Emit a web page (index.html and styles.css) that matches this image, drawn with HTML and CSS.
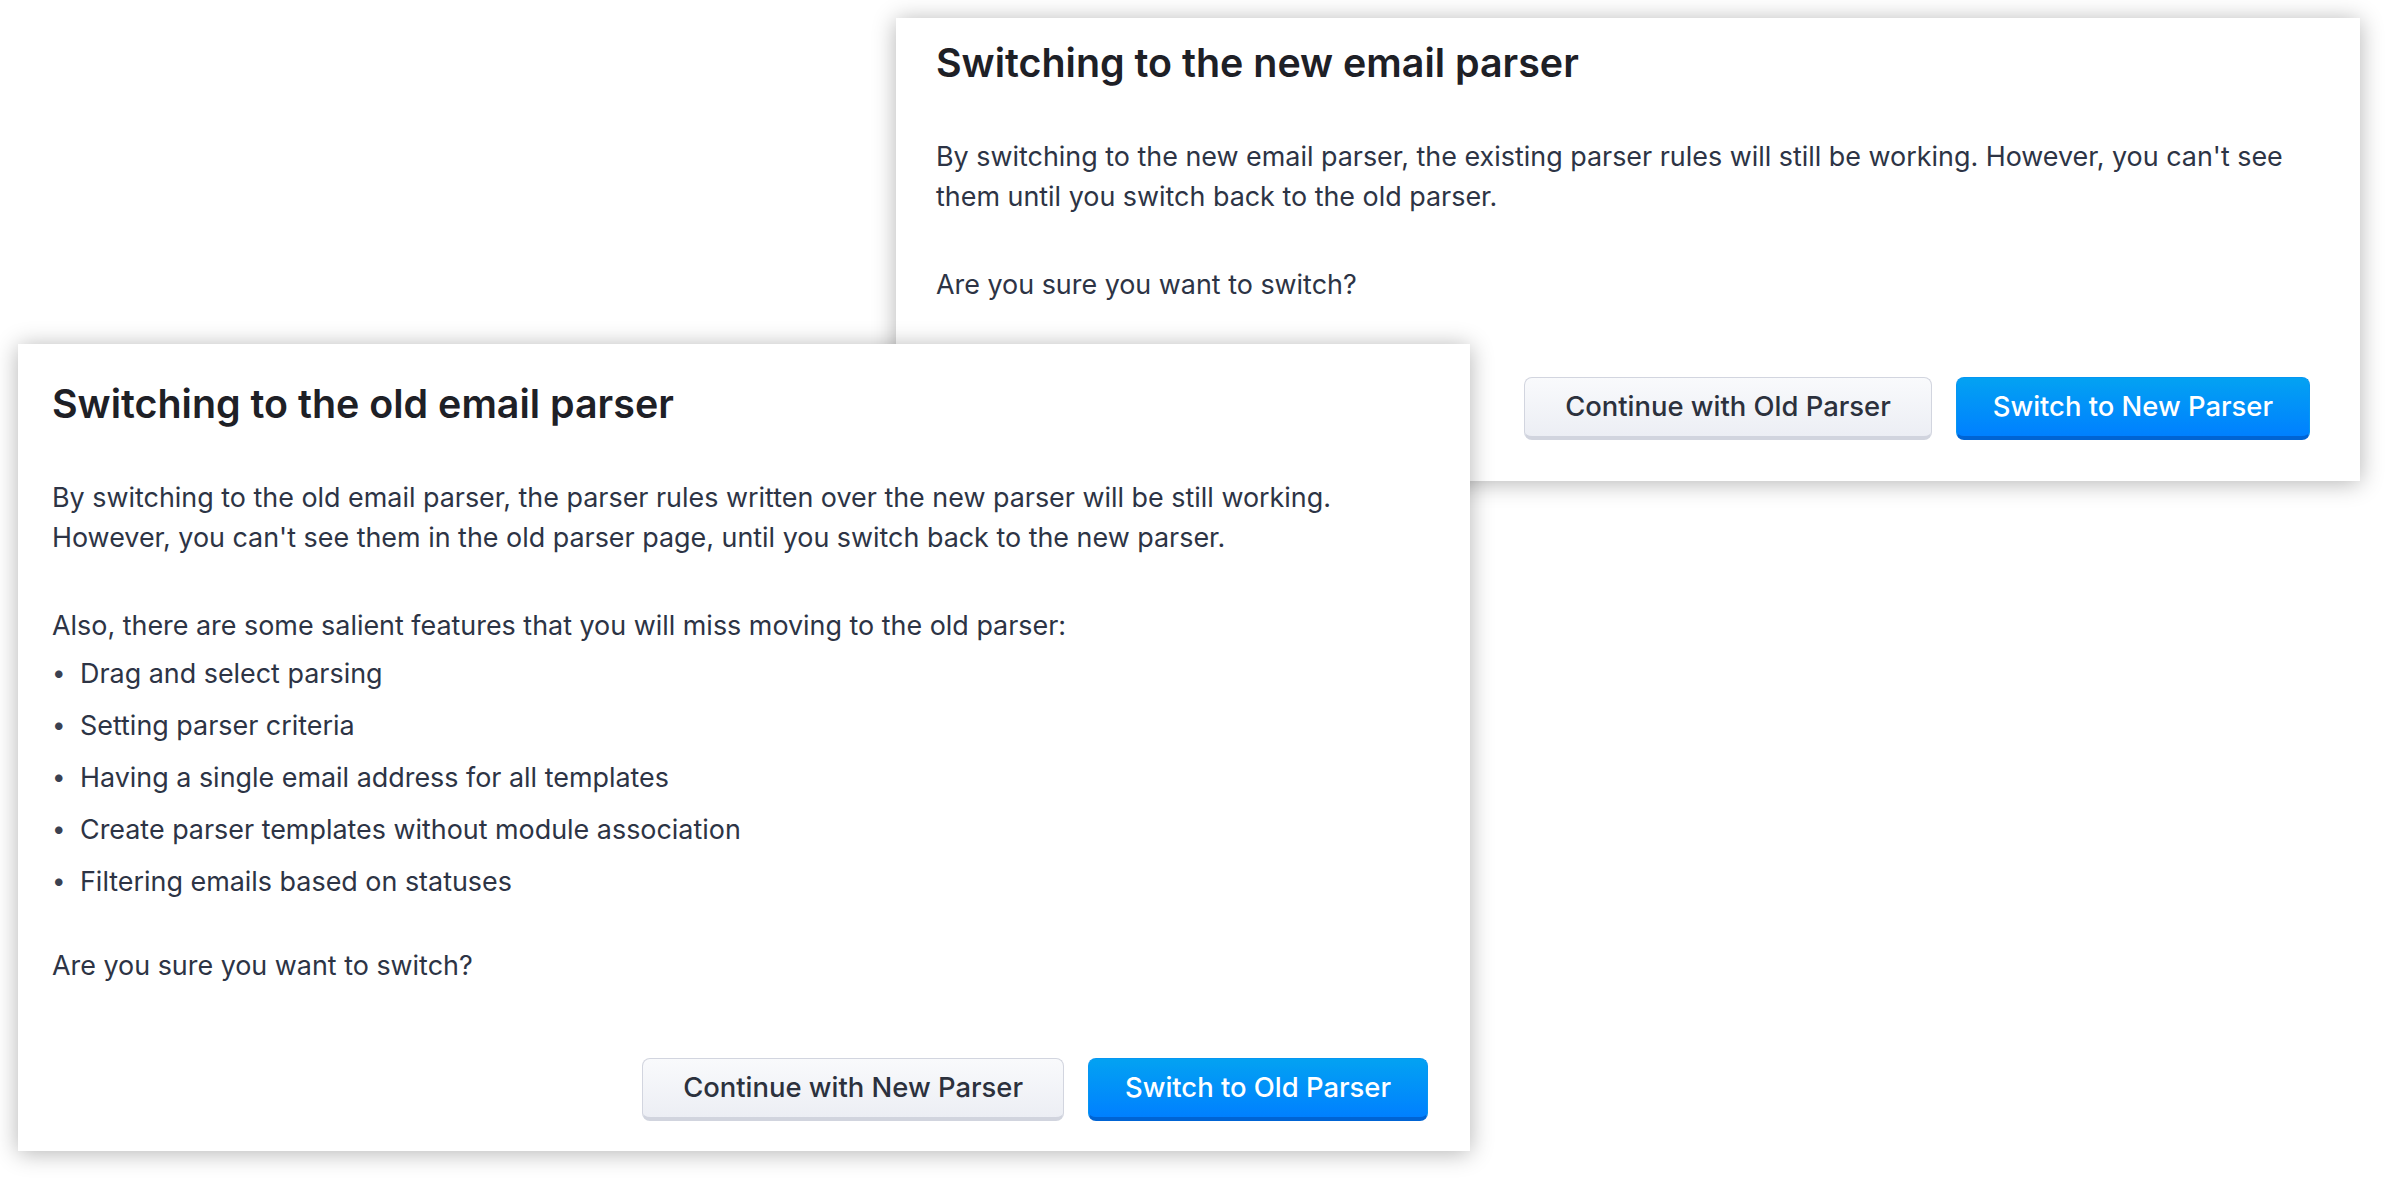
FILE: index.html
```html
<!DOCTYPE html>
<html lang="en">
<head>
<meta charset="utf-8">
<title>Email parser switch dialogs</title>
<link rel="stylesheet" href="styles.css">
</head>
<body>
<div class="canvas">
  <section class="dialog dialog--new">
    <h2 class="dialog__title">Switching to the new email parser</h2>
    <p class="dialog__text">By switching to the new email parser, the existing parser rules will still be working. However, you can't see them until you switch back to the old parser.</p>
    <p class="dialog__text">Are you sure you want to switch?</p>
    <div class="dialog__actions">
      <button class="btn btn--secondary">Continue with Old Parser</button>
      <button class="btn btn--primary">Switch to New Parser</button>
    </div>
  </section>

  <section class="dialog dialog--old">
    <h2 class="dialog__title">Switching to the old email parser</h2>
    <p class="dialog__text">By switching to the old email parser, the parser rules written over the new parser will be still working. However, you can't see them in the old parser page, until you switch back to the new parser.</p>
    <p class="dialog__text dialog__text--lead">Also, there are some salient features that you will miss moving to the old parser:</p>
    <ul class="dialog__list">
      <li>Drag and select parsing</li>
      <li>Setting parser criteria</li>
      <li>Having a single email address for all templates</li>
      <li>Create parser templates without module association</li>
      <li>Filtering emails based on statuses</li>
    </ul>
    <p class="dialog__text">Are you sure you want to switch?</p>
    <div class="dialog__actions">
      <button class="btn btn--secondary">Continue with New Parser</button>
      <button class="btn btn--primary">Switch to Old Parser</button>
    </div>
  </section>
</div>
</body>
</html>
```

FILE: styles.css
```css
* { box-sizing: border-box; }

html, body {
  margin: 0;
  padding: 0;
  background: #ffffff;
}

body {
  font-family: "Inter", "Noto Sans", sans-serif;
  color: #2d3445;
}

.canvas {
  position: relative;
  width: 2390px;
  height: 1184px;
  overflow: hidden;
}

.dialog {
  position: absolute;
  background: #ffffff;
  box-shadow: 0 2px 22px rgba(0, 0, 0, 0.30);
  display: flex;
  flex-direction: column;
}

.dialog--new {
  left: 896px;
  top: 18px;
  width: 1464px;
  padding: 21px 50px 41px 40px;
  z-index: 1;
}

.dialog--old {
  left: 18px;
  top: 344px;
  width: 1452px;
  padding: 36px 42px 30px 34px;
  z-index: 2;
}

.dialog__title {
  margin: 0 0 49px;
  font-size: 39.4px;
  line-height: 48px;
  font-weight: 600;
  color: #1e2026;
  letter-spacing: 0;
}

.dialog__text {
  margin: 0 0 48px;
  font-size: 26.9px;
  line-height: 40px;
  font-weight: 400;
  color: #2d3445;
}

.dialog__text--lead {
  margin-bottom: 0;
}

.dialog__list {
  list-style: none;
  margin: 8px 0 44px;
  padding: 0;
  font-size: 26.9px;
  line-height: 40px;
  color: #2d3445;
}

.dialog__list li {
  display: flex;
}

.dialog__list li + li {
  margin-top: 12px;
}

.dialog__list li::before {
  content: "\2022";
  flex: 0 0 28px;
  font-size: 24px;
  color: #3a4151;
}

.dialog__actions {
  display: flex;
  justify-content: flex-end;
  gap: 24px;
  margin-top: 25px;
}

.btn {
  height: 63px;
  padding: 0 40px;
  border-radius: 8px;
  font-family: "Inter", "Noto Sans", sans-serif;
  font-size: 27.4px;
  font-weight: 500;
  line-height: 1;
  cursor: pointer;
}

.btn--secondary {
  color: #2c313d;
  background: linear-gradient(#f9fafc, #eceef4);
  border: 1px solid #d2d5df;
  border-bottom: 4px solid #d1d4de;
}

.btn--primary {
  padding: 0 36px;
  color: #ffffff;
  background: linear-gradient(#03a2f2, #0080ff);
  border: 1px solid #0696f2;
  border-bottom: 4px solid #0064d4;
}
```
